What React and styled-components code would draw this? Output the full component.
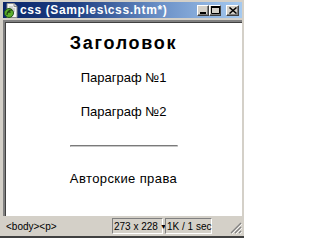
import styled, { createGlobalStyle } from "styled-components";

const GlobalStyle = createGlobalStyle`
  html, body {
    margin: 0;
    padding: 0;
    background: #ffffff;
  }
`;

const Window = styled.div`
  width: 244px;
  height: 238px;
  box-sizing: border-box;
  background: #d4d0c8;
  padding: 2px 2px 2px 3px;
  border-bottom: 2px solid #404040;
  display: flex;
  flex-direction: column;
  font-family: "Liberation Sans", Arial, sans-serif;
  overflow: hidden;
`;

const TitleBar = styled.div`
  height: 16px;
  flex-shrink: 0;
  display: flex;
  align-items: center;
  padding: 0 3px 0 1px;
  background: linear-gradient(to right, #0a246a 0%, #1e3f82 30%, #6a8fc6 65%, #a6caf0 100%);
`;

const TitleText = styled.span`
  flex: 1;
  margin-left: 2px;
  color: #ffffff;
  font-size: 12px;
  font-weight: bold;
  letter-spacing: 0.6px;
  white-space: nowrap;
  overflow: hidden;
`;

const CaptionButton = styled.button`
  width: ${(p) => p.$w || 12}px;
  height: 11px;
  margin-left: ${(p) => p.$gap || 0}px;
  padding: 0;
  box-sizing: border-box;
  background: #d4d0c8;
  border: 1px solid;
  border-color: #ffffff #404040 #404040 #ffffff;
  box-shadow: inset -1px -1px #808080;
  display: flex;
  align-items: center;
  justify-content: center;
`;

const Content = styled.main`
  flex: 1;
  margin-top: 2px;
  background: #ffffff;
  border-top: 2px solid #808080;
  border-left: 2px solid #808080;
  box-shadow: inset 1px 1px #404040;
  display: flex;
  flex-direction: column;
  align-items: center;
  padding-top: 10px;
  color: #000000;
`;

const Heading = styled.h1`
  margin: 0;
  font-size: 18px;
  line-height: 22px;
  font-weight: bold;
  letter-spacing: 1.7px;
`;

const Para = styled.p`
  margin: ${(p) => p.$top}px 0 0;
  font-size: 13px;
  line-height: 16px;
  letter-spacing: ${(p) => p.$spacing || 0}px;
`;

const Rule = styled.hr`
  width: 106px;
  height: 0;
  margin: 25px 0 0;
  border: 0;
  border-top: 1px solid #7a7a7a;
  border-bottom: 1px solid #c8c8c8;
  border-left: 1px solid #9a9a9a;
  border-right: 1px solid #d8d8d8;
`;

const StatusBar = styled.footer`
  height: 18px;
  flex-shrink: 0;
  box-sizing: border-box;
  padding-top: 2px;
  display: flex;
  align-items: stretch;
  font-size: 10px;
  color: #000000;
`;

const StatusPath = styled.span`
  flex: 1;
  display: flex;
  align-items: center;
  padding-left: 3px;
`;

const Panel = styled.div`
  width: ${(p) => p.$w}px;
  margin-left: ${(p) => p.$gap || 0}px;
  box-sizing: border-box;
  border: 1px solid;
  border-color: #808080 #ffffff #ffffff #808080;
  display: flex;
  align-items: center;
  padding-left: 1px;
  gap: 2px;
  white-space: nowrap;
`;

const Grip = styled.div`
  width: 30px;
  display: flex;
  align-items: flex-end;
  justify-content: flex-end;
`;

const DocIcon = () => (
  <svg width="14" height="15" viewBox="0 0 14 15">
    <path d="M3 0.5h7l3 3v11H3z" fill="#f2f2f2" stroke="#8a8a8a" />
    <path d="M10 0.5v3h3" fill="#d8d8d8" stroke="#8a8a8a" />
    <path d="M5 4h4M5 6h6M5 8h6" stroke="#b0b0b0" />
    <circle cx="5" cy="10" r="4.5" fill="#5cae2c" stroke="#24561a" />
    <path d="M3 12c0-3 2-5 5-5M3.5 9.5c1-1 2-1 3 0" stroke="#1c3d10" strokeWidth="1.2" fill="none" />
  </svg>
);

const MinGlyph = () => (
  <svg width="8" height="7" viewBox="0 0 8 7">
    <rect x="1" y="5" width="6" height="2" fill="#000" />
  </svg>
);

const MaxGlyph = () => (
  <svg width="9" height="8" viewBox="0 0 9 8">
    <path d="M0.5 1.5h8v6h-8z" fill="none" stroke="#000" />
    <rect x="0" y="0" width="9" height="2" fill="#000" />
  </svg>
);

const CloseGlyph = () => (
  <svg width="8" height="7" viewBox="0 0 8 7">
    <path d="M0.5 0.5l7 6M7.5 0.5l-7 6" stroke="#000" strokeWidth="1.5" />
  </svg>
);

const GripGlyph = () => (
  <svg width="12" height="12" viewBox="0 0 12 12">
    <path d="M11 1L1 11M11 5L5 11M11 9L9 11" stroke="#808080" strokeWidth="1.2" />
    <path d="M12 2L2 12M12 6L6 12M12 10L10 12" stroke="#ffffff" strokeWidth="0.8" />
  </svg>
);

const App = () => {
  return (
    <>
      <GlobalStyle />
      <Window>
        <TitleBar>
          <DocIcon />
          <TitleText>css (Samples\css.htm*)</TitleText>
          <CaptionButton>
            <MinGlyph />
          </CaptionButton>
          <CaptionButton>
            <MaxGlyph />
          </CaptionButton>
          <CaptionButton $w={13} $gap={5}>
            <CloseGlyph />
          </CaptionButton>
        </TitleBar>
        <Content>
          <Heading>Заголовок</Heading>
          <Para $top={16}>Параграф №1</Para>
          <Para $top={18}>Параграф №2</Para>
          <Rule />
          <Para $top={24} $spacing={0.4}>Авторские права</Para>
        </Content>
        <StatusBar>
          <StatusPath>{"<body><p>"}</StatusPath>
          <Panel $w={51}>
            273 x 228 <span style={{ fontSize: "7px" }}>▼</span>
          </Panel>
          <Panel $w={47} $gap={2}>1K / 1 sec</Panel>
          <Grip>
            <GripGlyph />
          </Grip>
        </StatusBar>
      </Window>
    </>
  );
};

export default App;
